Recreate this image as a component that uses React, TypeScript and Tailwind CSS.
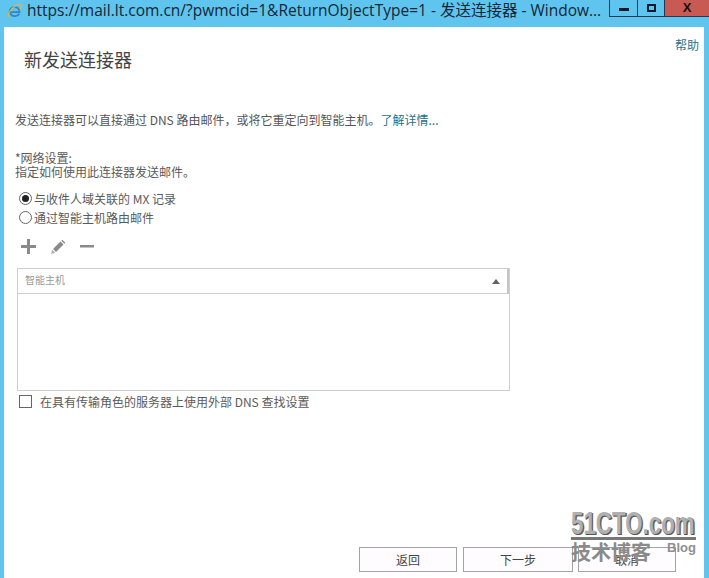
const cjk = "font-['Noto_Sans_CJK_SC','Liberation_Sans',sans-serif]";

function IeLogo() {
  return (
    <svg width="17" height="16" viewBox="0 0 18 18" fill="none">
      <path d="M3.4 10.2h11.2c.2-3.3-2.2-5.700-5.400-5.700-3.300 0-5.600 2.500-5.800 5.700Z" stroke="#2f86c8" strokeWidth="2" />
      <path d="M14.400 12.100c-.9 1.600-2.900 2.700-5 2.600-2.600 0-4.800-1.700-5.600-4.400" stroke="#2f86c8" strokeWidth="2" />
      <path d="M2.400 15.500C.9 13.800 3.400 8.200 8 4.800c3.900-2.900 7.600-3.900 8.800-2.800 1 1-.1 3.200-1.700 5.200" stroke="#e8b73a" strokeWidth="1.300" />
    </svg>
  );
}

function Pencil() {
  return (
    <svg width="16" height="16" viewBox="0 0 16 16">
      <path d="M1 15l1.200-4.300 3 3L1 15Z" fill="#b0b0b0" />
      <path d="M3 10l7.500-7.500 3 3L6 13Z" fill="#8a8a8a" />
      <path d="M11.300 1.700l1-1 3 3-1 1Z" fill="#8a8a8a" />
    </svg>
  );
}

function Radio({ on }: { on?: boolean }) {
  return (
    <span className="w-[13px] h-[13px] rounded-full border border-[#666] bg-white flex items-center justify-center shrink-0">
      {on && <span className="w-[7px] h-[7px] rounded-full bg-[#222]" />}
    </span>
  );
}

function Btn({ label, w }: { label: string; w: string }) {
  return (
    <div className={`${w} h-[25px] border border-[#a3a3a3] bg-[#fefcfe] flex items-center justify-center text-[12px] text-[#444]`}>
      {label}
    </div>
  );
}

export default function App() {
  return (
    <div className={`relative w-[709px] h-[578px] overflow-hidden bg-[#5fc5ee] flex flex-col ${cjk}`}>
      <div className="h-[27px] shrink-0 flex items-start">
        <div className="w-[27px] h-[24px] pl-[6px] pt-[3px] shrink-0">
          <IeLogo />
        </div>
        <div className="w-[582px] h-[24px] text-[15.5px] leading-[20px] text-[#12263a] whitespace-nowrap font-['Open_Sans','Noto_Sans_CJK_SC',sans-serif]">
          https://mail.lt.com.cn/?pwmcid=1&amp;ReturnObjectType=1 - 发送连接器 - Window...
        </div>
        <div className="flex h-[17px]">
          <div className="w-[28px] border-l border-b border-[#1d3a52] flex items-center justify-center">
            <span className="w-[10px] h-[3px] bg-[#0c1c2c] mt-[3px]" />
          </div>
          <div className="w-[27px] border-l border-b border-[#1d3a52] flex items-center justify-center">
            <span className="w-[9px] h-[8px] border-2 border-[#0c1c2c]" />
          </div>
          <div className="w-[45px] bg-[#c75a52] border-l border-b border-[#1d3a52] flex items-center justify-center text-[13px] font-bold text-[#1a1010] font-['Liberation_Sans',sans-serif]">
            X
          </div>
        </div>
      </div>
      <div className="flex-1 ml-[4px] mr-[5px] bg-white flex flex-col text-[#5a5a5a]">
        <div className="flex justify-end pr-[5px] pt-[9px] h-[20px] text-[12px] leading-[17px] text-[#1f7490]">帮助</div>
        <div className="pl-[20px] h-[44px] text-[18px] leading-[24px] text-[#444]">新发送连接器</div>
        <div className="pl-[11px] pt-[20px] h-[48px] text-[12px] leading-[18px] text-[#555] whitespace-nowrap">
          发送连接器可以直接通过 DNS 路由邮件，或将它重定向到智能主机。<span className="text-[#1f6f8b]">了解详情...</span>
        </div>
        <div className="pl-[11px] pt-[12px] text-[12px] leading-[14px]">
          <div>*网络设置:</div>
          <div>指定如何使用此连接器发送邮件。</div>
        </div>
        <div className="pl-[15px] pt-[10px] text-[12px] leading-[19px]">
          <div className="flex items-center gap-[2px] h-[19px]"><Radio on /><span>与收件人域关联的 MX 记录</span></div>
          <div className="flex items-center gap-[2px] h-[19px]"><Radio /><span>通过智能主机路由邮件</span></div>
        </div>
        <div className="pl-[17px] pt-[8px] h-[31px] flex items-center gap-[14px]">
          <svg width="15" height="15" viewBox="0 0 15 15"><path d="M6 0h3v6h6v3H9v6H6V9H0V6h6Z" fill="#8a8a8a" /></svg>
          <Pencil />
          <svg width="14" height="15" viewBox="0 0 14 15"><rect y="6" width="14" height="2.500" fill="#8a8a8a" /></svg>
        </div>
        <div className="ml-[13px] mt-[10px] w-[493px] h-[123px] border border-[#cfcfcf] flex flex-col">
          <div className="h-[25px] border-b border-[#cfcfcf] border-r-2 border-r-[#c4c4c4] flex items-center justify-between pl-[7px] pr-[7px] text-[10px] text-[#999]">
            <span className="mb-[3px]">智能主机</span>
            <span className="w-0 h-0 border-l-[4px] border-r-[4px] border-b-[5px] border-l-transparent border-r-transparent border-b-[#666]" />
          </div>
        </div>
        <div className="pl-[15px] pt-[1px] flex items-center gap-[8px] text-[12px] h-[20px]">
          <span className="w-[13px] h-[13px] border border-[#666] bg-white shrink-0" />
          <span>在具有传输角色的服务器上使用外部 DNS 查找设置</span>
        </div>
        <div className="flex-1 flex items-end pb-[6px] pl-[355px]">
          <Btn label="返回" w="w-[98px]" />
          <div className="ml-[6px]"><Btn label="下一步" w="w-[110px]" /></div>
          <div className="ml-[5px]"><Btn label="取消" w="w-[98px]" /></div>
        </div>
      </div>
      <div className="absolute left-[571px] top-[508px] w-[125px] text-[#8f8f8f]">
        <div className="h-[32px] border-b-[3px] border-[#777]">
          <div className="origin-left scale-x-[0.72] text-[31px] leading-[31px] font-bold text-[#b0b0b0] [text-shadow:1px_1px_0_#555,2px_1px_0_#777] font-['Liberation_Sans',sans-serif] whitespace-nowrap">51CTO.com</div>
        </div>
        <div className="flex items-start justify-between">
          <span className="text-[20px] leading-[24px] font-bold text-[#8a8a8a]">技术博客</span>
          <span className="text-[13px] leading-[14px] font-bold font-['Liberation_Sans',sans-serif] mt-[1px]">Blog</span>
        </div>
      </div>
    </div>
  );
}
